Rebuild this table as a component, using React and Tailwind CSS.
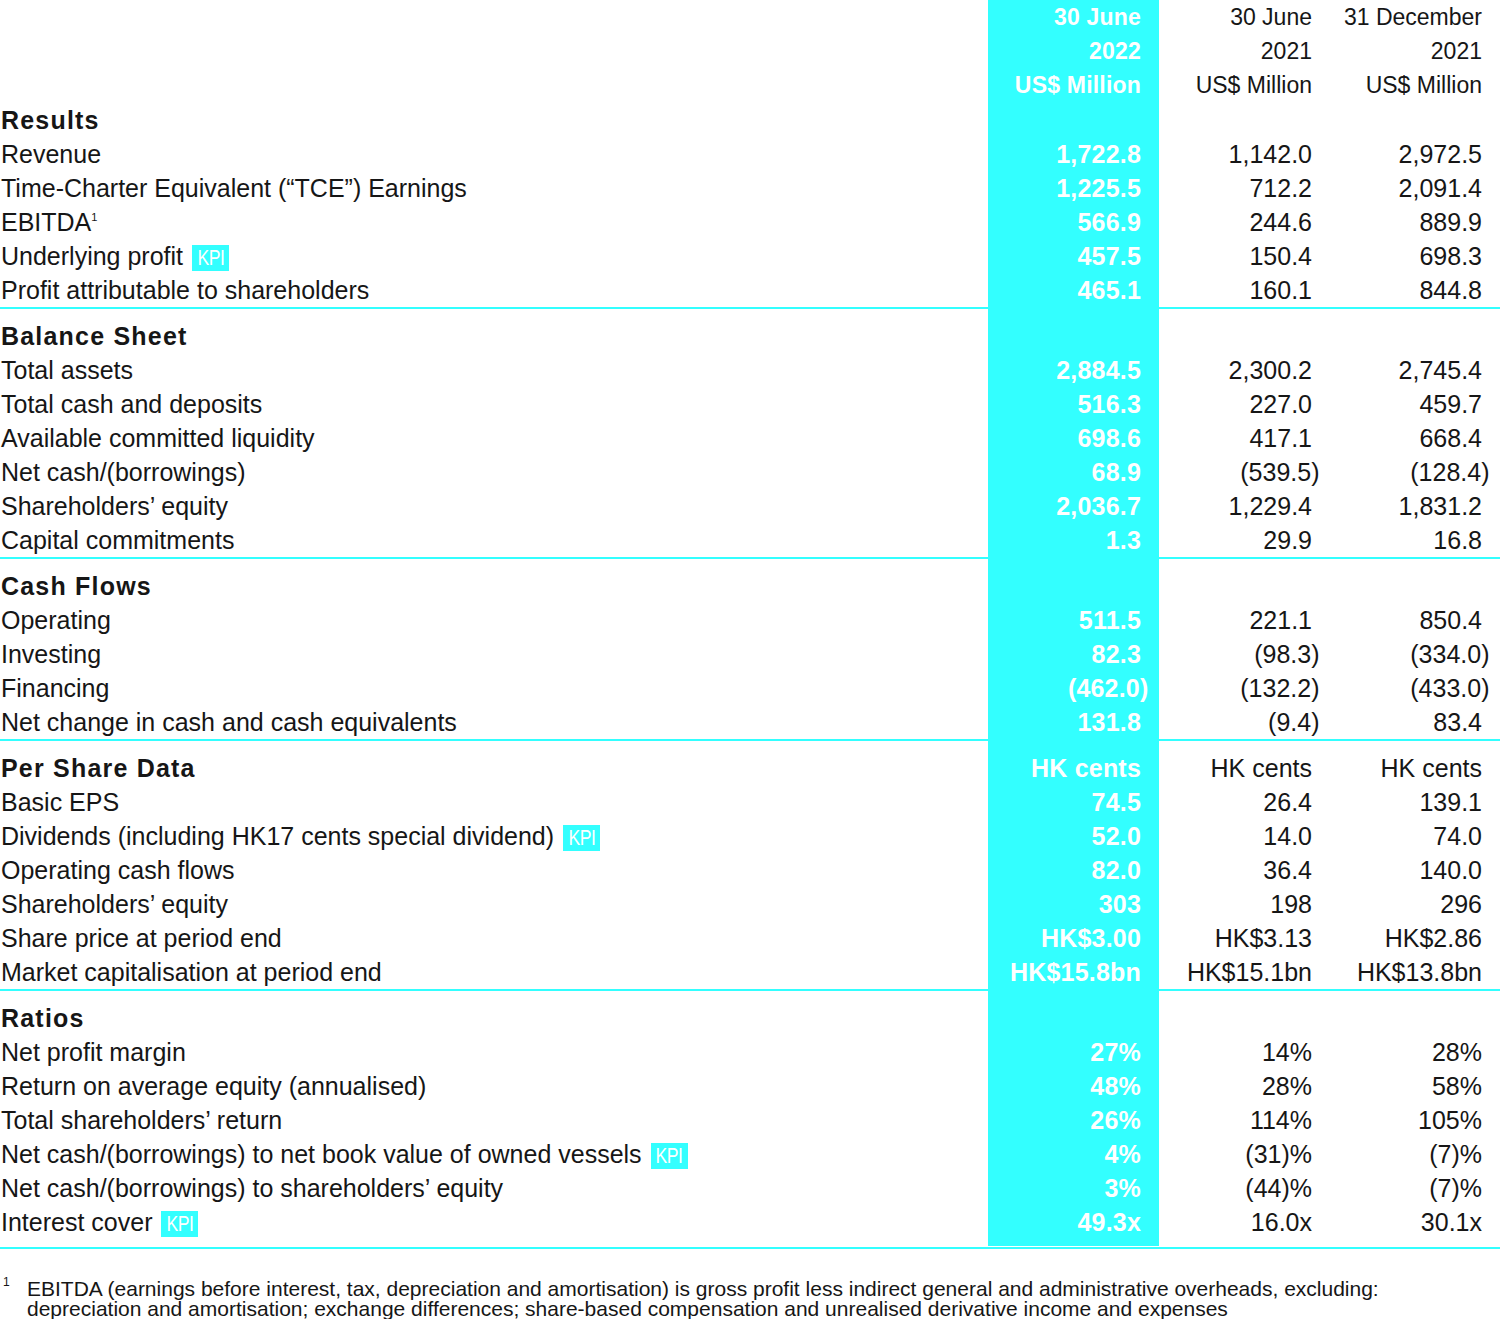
import React from 'react';

const CYAN = 'bg-[#33ffff]';

const sections = [
  {
    title: 'Results',
    rows: [
      ['Revenue', '1,722.8', '1,142.0', '2,972.5'],
      ['Time-Charter Equivalent (“TCE”) Earnings', '1,225.5', '712.2', '2,091.4'],
      ['EBITDA', '566.9', '244.6', '889.9', { sup: '1' }],
      ['Underlying profit', '457.5', '150.4', '698.3', { kpi: true }],
      ['Profit attributable to shareholders', '465.1', '160.1', '844.8'],
    ],
  },
  {
    title: 'Balance Sheet',
    rows: [
      ['Total assets', '2,884.5', '2,300.2', '2,745.4'],
      ['Total cash and deposits', '516.3', '227.0', '459.7'],
      ['Available committed liquidity', '698.6', '417.1', '668.4'],
      ['Net cash/(borrowings)', '68.9', '(539.5)', '(128.4)'],
      ['Shareholders’ equity', '2,036.7', '1,229.4', '1,831.2'],
      ['Capital commitments', '1.3', '29.9', '16.8'],
    ],
  },
  {
    title: 'Cash Flows',
    rows: [
      ['Operating', '511.5', '221.1', '850.4'],
      ['Investing', '82.3', '(98.3)', '(334.0)'],
      ['Financing', '(462.0)', '(132.2)', '(433.0)'],
      ['Net change in cash and cash equivalents', '131.8', '(9.4)', '83.4'],
    ],
  },
  {
    title: 'Per Share Data',
    units: ['HK cents', 'HK cents', 'HK cents'],
    rows: [
      ['Basic EPS', '74.5', '26.4', '139.1'],
      ['Dividends (including HK17 cents special dividend)', '52.0', '14.0', '74.0', { kpi: true }],
      ['Operating cash flows', '82.0', '36.4', '140.0'],
      ['Shareholders’ equity', '303', '198', '296'],
      ['Share price at period end', 'HK$3.00', 'HK$3.13', 'HK$2.86'],
      ['Market capitalisation at period end', 'HK$15.8bn', 'HK$15.1bn', 'HK$13.8bn'],
    ],
  },
  {
    title: 'Ratios',
    rows: [
      ['Net profit margin', '27%', '14%', '28%'],
      ['Return on average equity (annualised)', '48%', '28%', '58%'],
      ['Total shareholders’ return', '26%', '114%', '105%'],
      ['Net cash/(borrowings) to net book value of owned vessels', '4%', '(31)%', '(7)%', { kpi: true }],
      ['Net cash/(borrowings) to shareholders’ equity', '3%', '(44)%', '(7)%'],
      ['Interest cover', '49.3x', '16.0x', '30.1x', { kpi: true }],
    ],
  },
];

// closing bracket hangs past the column edge so the digits line up
const Value = ({ v }) => {
  if (v && v.endsWith(')')) {
    return (
      <span>
        {v.slice(0, -1)}
        <span className="-mr-[0.3em]">)</span>
      </span>
    );
  }
  return <span>{v}</span>;
};

const Kpi = () => (
  <span className="ml-[9px] inline-flex h-[26px] w-[37px] translate-y-[1px] items-center justify-center overflow-hidden bg-[#33ffff] text-white">
    <span className="inline-block scale-x-[0.8] text-[22px] leading-none tracking-[-0.5px]">KPI</span>
  </span>
);

const Row = ({ label, values = [], heading = false, h = 'h-[34px]', size = '' }) => (
  <div className={`grid grid-cols-[1fr_171px_171px_170px] ${h} ${size}`}>
    <div className={`flex items-center pl-[1px] ${heading ? 'font-bold tracking-[1.2px]' : ''}`}>{label}</div>
    <div className={`flex items-center justify-end pr-[18px] font-bold tracking-[0.2px] text-white ${CYAN}`}>
      <Value v={values[0]} />
    </div>
    <div className="flex items-center justify-end pr-[18px]">
      <Value v={values[1]} />
    </div>
    <div className="flex items-center justify-end pr-[18px]">
      <Value v={values[2]} />
    </div>
  </div>
);

const Separator = () => (
  <div className="py-px">
    <div className="h-[2px] bg-[#33ffff]" />
  </div>
);

export default function App() {
  return (
    <div className="w-[1500px] bg-white font-['Liberation_Sans',Arial,sans-serif] text-[25px] text-[#161616]">
      {/* Column headers */}
      <Row size="text-[23px]" values={['30 June', '30 June', '31 December']} />
      <Row size="text-[23px]" values={['2022', '2021', '2021']} />
      <Row size="text-[23px]" values={['US$ Million', 'US$ Million', 'US$ Million']} />

      {sections.map((section, i) => (
        <div key={section.title}>
          {i > 0 && <Row h="h-[8px]" />}
          <Row label={section.title} heading values={section.units} />
          {section.rows.map(([label, a, b, c, opts = {}]) => (
            <Row
              key={label}
              values={[a, b, c]}
              label={
                <span className="flex items-center">
                  {label}
                  {opts.sup && <sup className="top-[-0.55em] text-[11px]">{opts.sup}</sup>}
                  {opts.kpi && <Kpi />}
                </span>
              }
            />
          ))}
          {i === sections.length - 1 && <Row h="h-[8px]" />}
          <Separator />
        </div>
      ))}

      {/* Footnote */}
      <div className="mt-[29px] flex text-[21px] leading-[20px]">
        <span className="w-[27px] shrink-0 pl-[3px] text-[12px] leading-[12px] -translate-y-[3px]">1</span>
        <p>
          EBITDA (earnings before interest, tax, depreciation and amortisation) is gross profit less indirect general and administrative overheads, excluding:
          <br />
          depreciation and amortisation; exchange differences; share-based compensation and unrealised derivative income and expenses
        </p>
      </div>
    </div>
  );
}
